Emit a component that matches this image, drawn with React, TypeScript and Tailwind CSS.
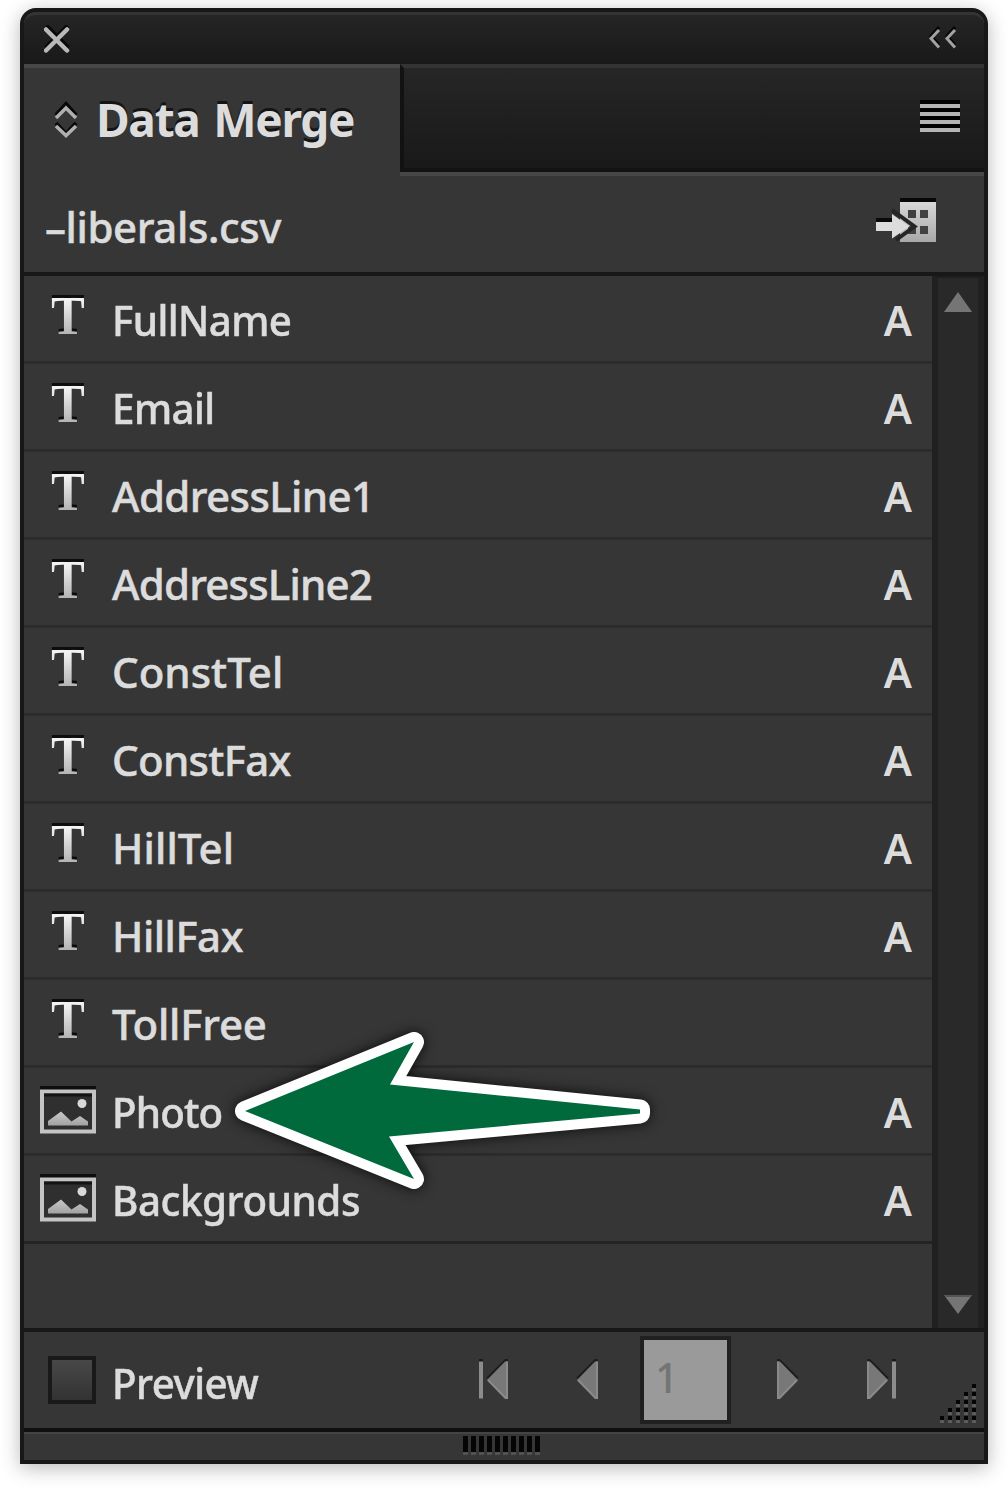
import React from "react";

type Field = { name: string; kind: "text" | "image"; applied: boolean; fit: string };

const fields: Field[] = [
  { name: "FullName", kind: "text", applied: true, fit: "scale-x-[0.96] tracking-[-0.6px]" },
  { name: "Email", kind: "text", applied: true, fit: "scale-x-[0.96] tracking-[-0.6px]" },
  { name: "AddressLine1", kind: "text", applied: true, fit: "tracking-[-0.6px]" },
  { name: "AddressLine2", kind: "text", applied: true, fit: "tracking-[-0.8px]" },
  { name: "ConstTel", kind: "text", applied: true, fit: "tracking-[0px]" },
  { name: "ConstFax", kind: "text", applied: true, fit: "tracking-[-0.7px]" },
  { name: "HillTel", kind: "text", applied: true, fit: "tracking-[0.1px]" },
  { name: "HillFax", kind: "text", applied: true, fit: "tracking-[-0.5px]" },
  { name: "TollFree", kind: "text", applied: false, fit: "tracking-[-0.2px]" },
  { name: "Photo", kind: "image", applied: true, fit: "scale-x-[0.96] tracking-[-0.9px]" },
  { name: "Backgrounds", kind: "image", applied: true, fit: "scale-x-[0.96] tracking-[-0.45px]" },
];

function TextFieldIcon() {
  return (
    <span className="block h-[60px] w-14 scale-x-[0.92] text-center [filter:drop-shadow(0_-3px_0_#0c0c0c)]">
      <span className="bg-linear-to-b from-[#f2f2f2] from-25% to-[#b4b4b4] to-80% bg-clip-text font-['Liberation_Serif',serif] text-[55px] leading-[60px] font-bold text-transparent">
        T
      </span>
    </span>
  );
}

function ImageFieldIcon() {
  return (
    <svg width="56" height="48" viewBox="0 0 56 48" className="block">
      <defs>
        <linearGradient id="hill" x1="0" y1="0" x2="0" y2="1">
          <stop offset="0" stopColor="#c8c8c8" />
          <stop offset="1" stopColor="#a2a2a2" />
        </linearGradient>
      </defs>
      <rect width="56" height="4" fill="#0e0e0e" />
      <rect x="2" y="5.500" width="52" height="40" fill="#2f2f2f" stroke="#c4c4c4" strokeWidth="4" />
      <path d="M4 7.500h48v3H4z" fill="#141414" />
      <circle cx="42" cy="17.500" r="4.500" fill="#d8d8d8" />
      <path d="M8 39.500V35l13-9.500 10.500 10 8.500-5.500 8 5.500v4z" fill="url(#hill)" />
    </svg>
  );
}

function Row({ field }: { field: Field }) {
  return (
    <li className="flex h-[88px] items-center border-b-[3px] border-[#2b2b2b] pr-5 pl-4 last:border-[#242424]">
      {field.kind === "text" ? (
        <div className="-mt-1.5">
          <TextFieldIcon />
        </div>
      ) : (
        <div className="-mt-px">
          <ImageFieldIcon />
        </div>
      )}
      <span className={`ml-4 origin-left pt-[3px] [-webkit-text-stroke:0.5px_#dcdcdc] ${field.fit}`}>{field.name}</span>
      {field.applied && <span className="ml-auto pt-[3px] font-semibold">A</span>}
    </li>
  );
}

function Tri({ flip, bar }: { flip?: boolean; bar?: boolean }) {
  return (
    <svg width="32" height="44" viewBox="0 0 32 44" className={`block shrink-0 ${flip ? "-scale-x-100" : ""}`}>
      {bar && <path d="M1 1h4v4H1z" fill="#1c1c1c" />}
      {bar && <path d="M1 3.500h4v37H1z" fill="#8c8c8c" />}
      <path d="M27 1h3v4L11 21l-3-1z" fill="#1c1c1c" />
      <path d="M30 3.500v37h-3L9 22 27 3.500z" fill="#787878" />
      <path d="M29 3.500v36.500h-1.500L10 22" fill="none" stroke="#8a8a8a" strokeWidth="2" />
    </svg>
  );
}

const gripRows = [1, 2, 3, 4, 5];

export default function App() {
  return (
    <main className="h-[1492px] w-[1008px] overflow-hidden bg-white pt-2 pl-5 font-['Noto_Sans','Open_Sans',sans-serif] text-[42px] leading-none font-medium text-[#dcdcdc]">
      <section className="relative flex h-[1456px] w-[968px] flex-col overflow-visible rounded-t-[16px] border-4 border-[#181818] bg-[#363636] shadow-[0_4px_20px_rgba(0,0,0,0.28)]">
        <header className="flex h-[52px] shrink-0 items-center justify-between rounded-t-xl border-t-[3px] border-[#343434] bg-linear-to-b from-[#252525] to-[#191919] pr-[27px] pl-5">
          <svg width="26" height="30" viewBox="0 0 26 30" className="block">
            <path d="M2 1l22 22M24 1L2 23" stroke="#080808" strokeWidth="5" />
            <path d="M2 4.500l21 21M23 4.500l-21 21" stroke="#b9b9b9" strokeWidth="4.500" strokeLinecap="round" />
          </svg>
          <svg width="28" height="26" viewBox="0 0 28 26" className="-mt-0.5 block">
            <path d="M10 1L2 10l8 9M26 1l-8 9 8 9" fill="none" stroke="#050505" strokeWidth="3" />
            <path d="M10 4L2 12.500l8 9M26 4l-8 8.500 8 9" fill="none" stroke="#a2a2a2" strokeWidth="3" />
          </svg>
        </header>

        <div className="flex h-[108px] shrink-0">
          <div className="flex w-[376px] items-start border-t-4 border-[#474747] bg-[#363636] pt-[26px] pl-[30px]">
            <svg width="24" height="40" viewBox="0 0 24 40" className="mt-[7px] block">
              <path d="M2 14L12 3l10 11M2 22l10 11 10-11" fill="none" stroke="#060606" strokeWidth="4" />
              <path d="M2 17L12 7l10 10M2 25l10 9.500L22 25" fill="none" stroke="#b0b0b0" strokeWidth="3.500" />
            </svg>
            <h1 className="ml-[18px] text-[46px] leading-[50px] font-bold tracking-[-1.3px] whitespace-nowrap [text-shadow:0_-3px_0_#141414] [word-spacing:3px]">
              Data Merge
            </h1>
          </div>
          <div className="flex flex-1 justify-end border-t-4 border-b-4 border-l-4 border-t-[#343434] border-b-[#121212] border-l-[#121212] bg-linear-to-b from-[#262626] to-[#191919] pr-6">
            <svg width="40" height="36" viewBox="0 0 40 36" className="mt-8 block" shapeRendering="crispEdges">
              <path d="M0 0h40v30H0z" fill="#020202" />
              <path d="M0 4h40v4H0zM0 12h40v4H0zM0 20h40v4H0zM0 28h40v4H0z" fill="#b4b4b4" />
            </svg>
          </div>
        </div>

        <div className="flex h-[104px] shrink-0 border-b-4 border-[#181818]">
          <div className="flex flex-1 items-start pt-[30px] pl-[21px]">
            <span className="leading-[50px] tracking-[-0.4px] [-webkit-text-stroke:0.5px_#dcdcdc]">–liberals.csv</span>
          </div>
          <div className="-ml-3 h-full w-[584px] border-t-4 border-[#474747]">
            <svg width="64" height="44" viewBox="0 0 64 44" className="mt-[22px] ml-[475px] block">
              <defs>
                <linearGradient id="sheet" x1="0" y1="0" x2="0" y2="1">
                  <stop offset="0" stopColor="#d8d8d8" />
                  <stop offset="1" stopColor="#a8a8a8" />
                </linearGradient>
              </defs>
              <path d="M25 0h36v5H25z" fill="#080808" />
              <path d="M25 4h36v40H25z" fill="url(#sheet)" />
              <path d="M33 12h8v8h-8zM45 12h8v8h-8zM33 28h8v8h-8zM45 28h8v8h-8z" fill="#414141" />
              <path d="M17 12l22.500 16.500L21 42" fill="none" stroke="#252525" strokeWidth="4" />
              <path d="M1 20h16v5H1z" fill="#0a0a0a" />
              <path d="M1 24h16v-8l17.500 12.500L17 40.500V33H1z" fill="#dcdcdc" />
            </svg>
          </div>
        </div>

        <div className="flex h-[1056px] shrink-0 border-b-4 border-[#181818]">
          <ul className="flex-1">
            {fields.map((field) => (
              <Row key={field.name} field={field} />
            ))}
          </ul>
          <div className="flex w-[52px] flex-col items-center justify-between border-t-2 border-r-[6px] border-l-[6px] border-t-[#1e1e1e] border-r-[#212121] border-l-[#202020] bg-[#292929] pt-3.5 pb-3.5">
            <svg width="28" height="20" viewBox="0 0 28 20" className="block">
              <path d="M14 0l14 20H0z" fill="#757575" />
            </svg>
            <svg width="28" height="19" viewBox="0 0 28 19" className="block">
              <path d="M0 0h28L14 19z" fill="#757575" />
              <path d="M0 0h28l-2 2H2z" fill="#555" />
            </svg>
          </div>
        </div>

        <footer className="relative flex h-[100px] shrink-0 items-center border-b-4 border-[#101010] pl-6">
          <div className="size-12 border-4 border-[#191919] bg-linear-to-b from-[#484848] to-[#333]" />
          <span className="ml-4 w-[366px] origin-left pt-1.5">
            <span className="inline-block origin-left scale-x-[0.96] tracking-[-0.6px] [-webkit-text-stroke:0.5px_#dcdcdc]">
              Preview
            </span>
          </span>
          <Tri bar />
          <div className="ml-[58px]">
            <Tri />
          </div>
          <div className="ml-10 flex h-[88px] w-[91px] border-4 border-[#202020] bg-[#9a9a9a] pt-[7px] pl-[11px] text-[41px] leading-[60px] text-[#747474]">
            1
          </div>
          <div className="ml-11">
            <Tri flip />
          </div>
          <div className="ml-[58px]">
            <Tri flip bar />
          </div>
          <div className="absolute right-2 bottom-1 flex flex-col items-end">
            {gripRows.map((n) => (
              <div key={n} className="flex h-2 gap-1">
                {gripRows.slice(0, n).map((d) => (
                  <i key={d} className="block h-[7px] w-1 border-b-[3px] border-[#5b5b5b] bg-[#050505]" />
                ))}
              </div>
            ))}
          </div>
        </footer>

        <div className="flex flex-1 items-start border-t-2 border-[#444] pt-0.5 pl-[439px]">
          <div className="flex gap-[3px]">
            {[...gripRows, ...gripRows].map((_, i) => (
              <i key={i} className="block h-[19px] w-[5px] border-b-[3px] border-[#525252] bg-[#050505]" />
            ))}
          </div>
        </div>

        <svg
          width="418"
          height="160"
          viewBox="0 0 418 160"
          className="absolute top-[1019px] left-[210px] overflow-visible drop-shadow-[0_0_7px_rgba(0,0,0,0.8)]"
        >
          <path
            d="M11 80L180 11 156 53.500 406 78.500v4L155 105.500l25 42.500z"
            fill="#fff"
            stroke="#fff"
            strokeWidth="20"
            strokeLinejoin="round"
          />
          <path d="M11 80L180 11 156 53.500 406 78.500v4L155 105.500l25 42.500z" fill="#006a3d" />
        </svg>
      </section>
    </main>
  );
}
